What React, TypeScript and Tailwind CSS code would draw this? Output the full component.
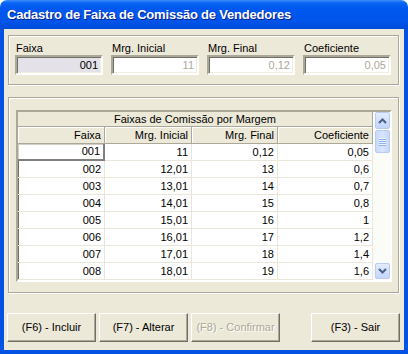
const rows = [
  ["001", "11", "0,12", "0,05"],
  ["002", "12,01", "13", "0,6"],
  ["003", "13,01", "14", "0,7"],
  ["004", "14,01", "15", "0,8"],
  ["005", "15,01", "16", "1"],
  ["006", "16,01", "17", "1,2"],
  ["007", "17,01", "18", "1,4"],
  ["008", "18,01", "19", "1,6"],
];

const colW = ["w-[87px]", "w-[87px]", "w-[86px]", "w-[95px]"];

function Chevron({ up }: { up?: boolean }) {
  return (
    <svg width="9" height="6" viewBox="0 0 9 6">
      <path
        d={up ? "M1 5 L4.5 1.5 L8 5" : "M1 1 L4.5 4.5 L8 1"}
        fill="none"
        stroke="#4D6185"
        strokeWidth="2"
      />
    </svg>
  );
}

function Field({ label, value, active }: { label: string; value: string; active?: boolean }) {
  return (
    <div className="flex flex-col w-[88px]">
      <span className="h-[11px] leading-[11px] pl-px">{label}</span>
      <div
        className={`mt-px h-[20px] flex items-center justify-end pr-[3px] border-2 border-t-[#ACA899] border-l-[#ACA899] border-b-white border-r-white shadow-[inset_1px_1px_0_#716F64,inset_-1px_-1px_0_#F1EFE2] ${
          active ? "bg-[#E4E2E8] text-black" : "bg-white text-[#ACA899]"
        }`}
      >
        {value}
      </div>
    </div>
  );
}

function Button({ label, disabled }: { label: string; disabled?: boolean }) {
  return (
    <div
      className={`w-[89px] h-[29px] flex items-center justify-center border border-t-white border-l-white border-b-[#716F64] border-r-[#716F64] shadow-[inset_-1px_-1px_0_#ACA899] bg-[#ECE9D8] ${
        disabled ? "text-[#ACA899] [text-shadow:1px_1px_0_#fff]" : "text-black"
      }`}
    >
      {label}
    </div>
  );
}

export default function App() {
  return (
    <div className="w-[408px] h-[354px] flex flex-col font-['Liberation_Sans',Arial,sans-serif] text-[11px] text-black">
      <div className="h-[29px] shrink-0 rounded-t-[7px] bg-[linear-gradient(to_bottom,#3D8DF9_0%,#0A66F5_10%,#0058EE_28%,#0055EA_70%,#004CD9_100%)] flex items-center pl-[7px] pt-px">
        <span className="text-white font-bold text-[13px] tracking-[-0.2px] [text-shadow:1px_1px_0_#0A1F8E]">
          Cadastro de Faixa de Comissão de Vendedores
        </span>
      </div>

      <div className="flex-1 flex flex-col border-x-4 border-b-4 border-[#0452E4] bg-[#ECE9D8] pl-[4px] pt-[6px]">
        <div className="w-[391px] h-[50px] border border-[#ACA899] shadow-[inset_1px_1px_0_#fff,1px_1px_0_#fff] pl-[6px] pt-[7px] flex gap-[8px]">
          <Field label="Faixa" value="001" active />
          <Field label="Mrg. Inicial" value="11" />
          <Field label="Mrg. Final" value="0,12" />
          <Field label="Coeficiente" value="0,05" />
        </div>

        <div className="mt-[12px] w-[391px] h-[196px] border border-[#ACA899] shadow-[inset_1px_1px_0_#fff,1px_1px_0_#fff] pl-[7px] pt-[12px]">
          <div className="w-[376px] h-[172px] flex bg-white border-2 border-t-[#ACA899] border-l-[#ACA899] border-b-white border-r-white shadow-[inset_1px_1px_0_#716F64,inset_-1px_-1px_0_#F1EFE2]">
            <div className="w-[355px] flex flex-col">
              <div className="h-[15px] flex items-center justify-center bg-[#ECE9D8] border-b border-r border-[#ACA899]">
                Faixas de Comissão por Margem
              </div>
              <div className="h-[17px] flex">
                {["Faixa", "Mrg. Inicial", "Mrg. Final", "Coeficiente"].map((h, i) => (
                  <div
                    key={h}
                    className={`${colW[i]} flex items-center justify-end pr-[3px] bg-[#ECE9D8] border-b border-r border-[#ACA899] shadow-[inset_1px_1px_0_#fff]`}
                  >
                    {h}
                  </div>
                ))}
              </div>
              {rows.map((r, ri) => (
                <div key={ri} className="h-[17px] flex">
                  {r.map((c, ci) => (
                    <div
                      key={ci}
                      className={`${colW[ci]} flex items-center justify-end pr-[3px] ${
                        ri === 0 && ci === 0
                          ? "border-r-2 border-b-2 border-[#808080] shadow-[inset_1px_1px_0_#D4D0C8] pr-[2px]"
                          : "border-r border-b border-[#EAE7DA]"
                      }`}
                    >
                      {c}
                    </div>
                  ))}
                </div>
              ))}
            </div>
            <div className="w-[17px] flex flex-col pl-[2px] bg-[#FBFBF8]">
              <div className="h-[17px] rounded-[2px] border border-[#B9CBF3] bg-[linear-gradient(to_bottom,#E3ECFE,#C3D5FC)] flex items-center justify-center">
                <Chevron up />
              </div>
              <div className="h-[23px] mt-px rounded-[2px] border border-[#B9CBF3] bg-[linear-gradient(to_right,#C9D8FC,#D9E4FE,#C6D6FC)] flex flex-col items-center justify-center gap-px">
                <div className="w-[7px] h-px bg-[#EEF4FE] shadow-[0_1px_0_#8CB0F8]" />
                <div className="w-[7px] h-px bg-[#EEF4FE] shadow-[0_1px_0_#8CB0F8]" />
                <div className="w-[7px] h-px bg-[#EEF4FE] shadow-[0_1px_0_#8CB0F8]" />
                <div className="w-[7px] h-px bg-[#EEF4FE] shadow-[0_1px_0_#8CB0F8]" />
              </div>
              <div className="flex-1" />
              <div className="h-[16px] mb-px rounded-[2px] border border-[#B9CBF3] bg-[linear-gradient(to_bottom,#E3ECFE,#C3D5FC)] flex items-center justify-center">
                <Chevron />
              </div>
            </div>
          </div>
        </div>

        <div className="mt-[20px] -ml-px flex">
          <div className="flex gap-[3px]">
            <Button label="(F6) - Incluir" />
            <Button label="(F7) - Alterar" />
            <Button label="(F8) - Confirmar" disabled />
          </div>
          <div className="ml-[31px]">
            <Button label="(F3) - Sair" />
          </div>
        </div>
      </div>
    </div>
  );
}
